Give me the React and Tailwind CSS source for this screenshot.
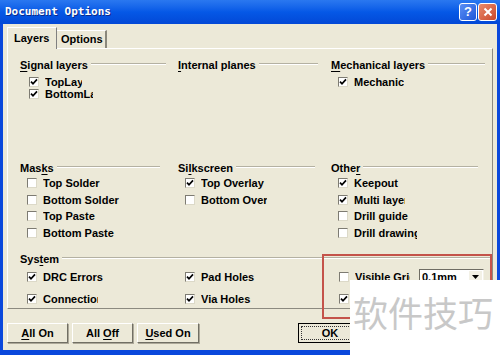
import React from "react";

function Check({ on }) {
  return (
    <span className="flex h-[10px] w-[10px] shrink-0 items-center justify-center border-t border-l border-t-[#7d7b72] border-l-[#7d7b72] border-r border-b border-r-[#dcd9c8] border-b-[#dcd9c8] bg-white">
      {on && (
        <svg width="8" height="8" viewBox="0 0 8 8">
          <path d="M1 3.6 L3 5.8 L7 1.4" fill="none" stroke="#000" strokeWidth="1.7" />
        </svg>
      )}
    </span>
  );
}

function Item({ label, on, h, w, children }) {
  return (
    <div className={`flex items-center pl-[7px] ${h}`}>
      <Check on={on} />
      {label && <span className={`ml-[6px] overflow-hidden whitespace-nowrap ${w}`}>{label}</span>}
      {children}
    </div>
  );
}

function Heading({ pre, u, post, w }) {
  return (
    <div className={`flex h-[14px] items-center ${w}`}>
      <span className="whitespace-pre">
        {pre}
        <span className="underline underline-offset-2">{u}</span>
        {post}
      </span>
      <span className="ml-[3px] h-[2px] flex-1 -translate-y-[1px] border-t border-b border-t-[#b4b1a2] border-b-white" />
    </div>
  );
}

function Btn({ pre, u, post, w }) {
  return (
    <button className={`flex h-[20px] items-center justify-center border-t border-l border-white border-r border-b border-r-[#716f64] border-b-[#716f64] bg-[#ece9d8] shadow-[1px_1px_0_#aca899] ${w}`}>
      <span className="whitespace-pre">
        {pre}
        <span className="underline underline-offset-2">{u}</span>
        {post}
      </span>
    </button>
  );
}

export default function App() {
  return (
    <div className="relative flex h-[355px] w-[500px] flex-col overflow-hidden bg-[#0a48dc] font-['Liberation_Sans',Arial,sans-serif] text-[11px] font-bold text-black">
      {/* title bar */}
      <div className="flex h-[24px] shrink-0 items-center bg-gradient-to-b from-[#2a78f0] via-[#0558e6] to-[#0348d6] pl-[5px] pr-[3px]">
        <span className="font-['DejaVu_Sans_Mono',monospace] text-[11px] font-bold text-white [text-shadow:1px_1px_0_#0a2a8a]">
          Document Options
        </span>
        <div className="ml-auto flex gap-[1px]">
          <div className="flex h-[18px] w-[18px] items-center justify-center rounded-[3px] border border-white bg-gradient-to-br from-[#5b8ff5] to-[#1d55d8] text-[13px] font-bold text-white">
            ?
          </div>
          <div className="flex h-[18px] w-[19px] items-center justify-center rounded-[3px] border border-white bg-gradient-to-br from-[#e98a6b] to-[#c9472a]">
            <svg width="10" height="10" viewBox="0 0 10 10">
              <path d="M1.5 1.5 L8.5 8.5 M8.5 1.5 L1.5 8.5" stroke="#fff" strokeWidth="2" />
            </svg>
          </div>
        </div>
      </div>

      {/* body */}
      <div className="mx-[3px] mb-[5px] flex flex-1 flex-col bg-[#ece9d8]">
        {/* tabs */}
        <div className="flex items-end pl-[4px] pt-[3px]">
          <div className="relative z-10 -mb-px flex h-[22px] w-[50px] items-center border-t border-l border-white border-r border-r-[#808080] bg-[#ece9d8] pl-[6px]">
            Layers
          </div>
          <div className="flex h-[18px] w-[50px] items-center border-t border-white border-r-2 border-r-[#8a887c] pl-[4px]">
            Options
          </div>
        </div>

        {/* panel */}
        <div className="mx-[4px] h-[261px] border-t border-l border-white border-r border-b border-r-[#8c8a80] border-b-[#8c8a80] pl-[12px] pt-[9px]">
          <div className="grid h-[103px] grid-cols-[158px_153px_1fr]">
            <div>
              <Heading pre="" u="S" post="ignal layers" w="w-[146px]" />
              <div className="mt-[4px] pl-[2px]">
                <Item label="TopLayer" on h="h-[12px]" w="w-[37px]" />
                <Item label="BottomLayer" on h="h-[12px]" w="w-[48px]" />
              </div>
            </div>
            <div>
              <Heading pre="" u="I" post="nternal planes" w="w-[140px]" />
            </div>
            <div>
              <Heading pre="" u="M" post="echanical layers" w="w-[154px]" />
              <div className="mt-[4px]">
                <Item label="Mechanical" on h="h-[12px]" w="w-[50px]" />
              </div>
            </div>
          </div>

          <div className="grid h-[91px] grid-cols-[158px_153px_1fr]">
            <div>
              <Heading pre="Mas" u="k" post="s" w="w-[140px]" />
              <Item label="Top Solder" h="h-[16.5px]" w="w-[90px]" />
              <Item label="Bottom Solder" h="h-[16.5px]" w="w-[90px]" />
              <Item label="Top Paste" h="h-[16.5px]" w="w-[90px]" />
              <Item label="Bottom Paste" h="h-[16.5px]" w="w-[90px]" />
            </div>
            <div>
              <Heading pre="Si" u="l" post="kscreen" w="w-[137px]" />
              <Item label="Top Overlay" on h="h-[16.5px]" w="w-[66px]" />
              <Item label="Bottom Overlay" h="h-[16.5px]" w="w-[66px]" />
            </div>
            <div>
              <Heading pre="Othe" u="r" post="" w="w-[147px]" />
              <Item label="Keepout" on h="h-[16.5px]" w="w-[63px]" />
              <Item label="Multi layer" on h="h-[16.5px]" w="w-[51px]" />
              <Item label="Drill guide" h="h-[16.5px]" w="w-[63px]" />
              <Item label="Drill drawing" h="h-[16.5px]" w="w-[63px]" />
            </div>
          </div>

          <div>
            <Heading pre="Sys" u="t" post="em" w="w-[470px]" />
            <div className="grid grid-cols-[158px_153px_1fr]">
              <div>
                <Item label="DRC Errors" on h="h-[22px]" w="w-[90px]" />
                <Item label="Connections" on h="h-[22px]" w="w-[55px]" />
              </div>
              <div>
                <Item label="Pad Holes" on h="h-[22px]" w="w-[90px]" />
                <Item label="Via Holes" on h="h-[22px]" w="w-[90px]" />
              </div>
              <div className="pl-[1px]">
                <Item label="Visible Grid" h="h-[22px]" w="w-[55px]">
                  <div className="ml-[9px] flex h-[17px] w-[65px] items-center border-t border-l border-[#6f6d64] border-r border-b border-r-[#f4f2e8] border-b-[#f4f2e8] bg-white pl-[2px]">
                    <span>0.1mm</span>
                    <span className="ml-auto mr-[1px] flex h-[13px] w-[13px] items-center justify-center bg-[#f3f1e6]">
                      <svg width="7" height="4" viewBox="0 0 7 4">
                        <path d="M0 0 H7 L3.5 4 Z" fill="#000" />
                      </svg>
                    </span>
                  </div>
                </Item>
                <Item on h="h-[22px]" />
              </div>
            </div>
          </div>
        </div>

        {/* buttons */}
        <div className="mt-[14px] flex pl-[4px]">
          <Btn pre="" u="A" post="ll On" w="w-[61px]" />
          <div className="w-[4px]" />
          <Btn pre="All " u="O" post="ff" w="w-[61px]" />
          <div className="w-[4px]" />
          <Btn pre="" u="U" post="sed On" w="w-[62px]" />
          <div className="ml-[99px] flex h-[20px] w-[64px] items-center justify-center border border-black bg-[#ece9d8] p-[2px]">
            <div className="flex h-full w-full items-center justify-center border border-dotted border-[#333]">
              OK
            </div>
          </div>
        </div>
      </div>

      {/* annotation box */}
      <div className="absolute left-[322px] top-[254px] h-[65px] w-[170px] border-2 border-[#c4534a]" />

      {/* watermark */}
      <div className="absolute left-[350px] top-[280px] flex h-[75px] w-[150px] items-start bg-white pl-[3px] pt-[12px]">
        <span className="font-['Noto_Sans_CJK_SC',sans-serif] text-[35px] font-normal leading-[40px] text-[#c8c8c8]">
          软件技巧
        </span>
      </div>
    </div>
  );
}
